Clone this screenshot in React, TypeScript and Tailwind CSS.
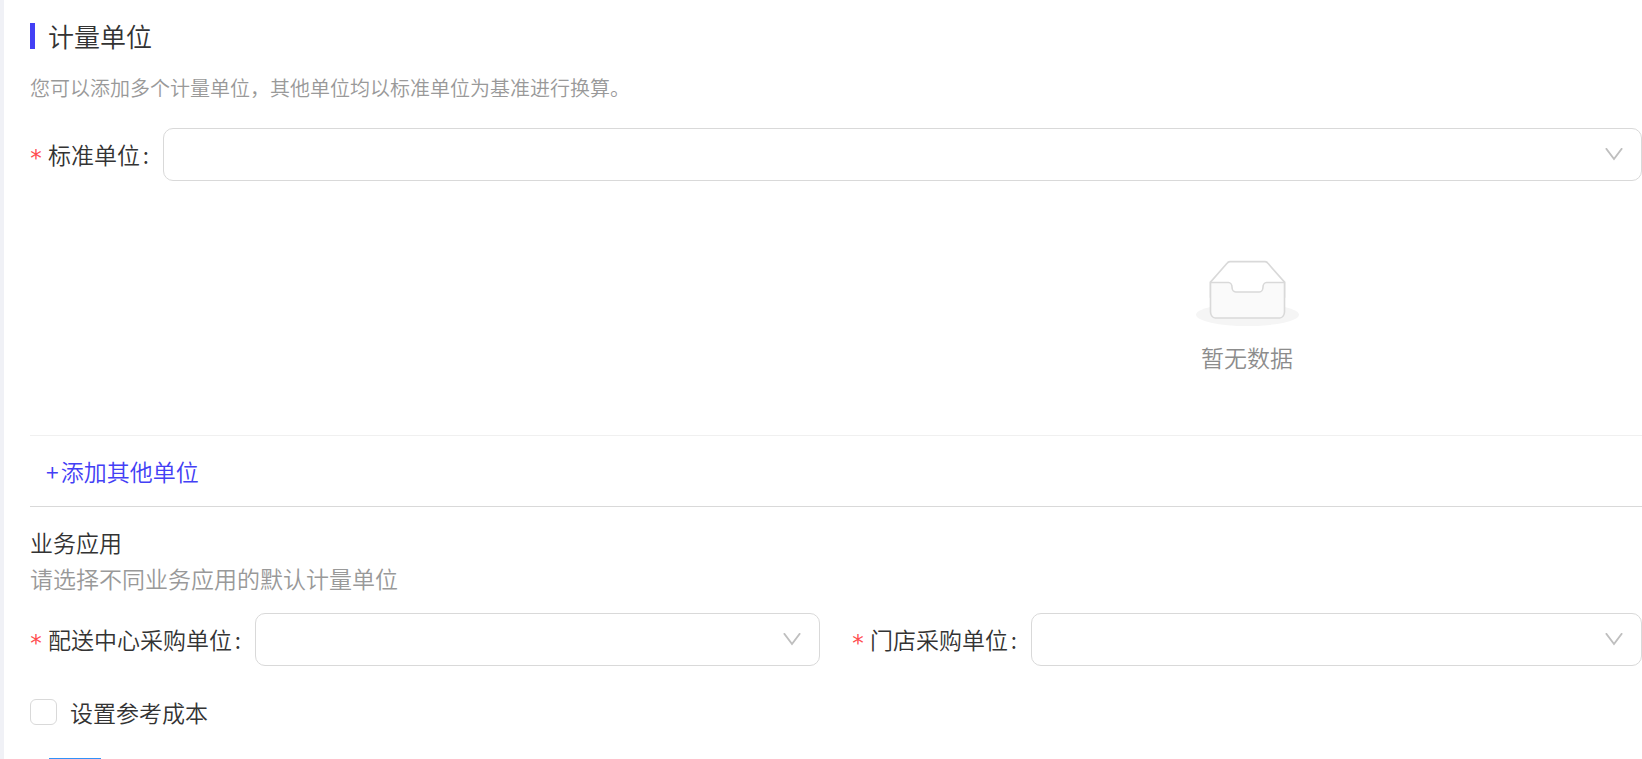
import React from 'react';

interface UnitSelectProps {
  id: string;
  label: string;
}

const UnitSelect: React.FC<UnitSelectProps> = ({ id, label }) => (
  <div className="flex items-center">
    <label htmlFor={id} className="flex items-center shrink-0 mr-3 pb-0.5">
      <span className="w-3 mr-1.5 pt-2 text-center font-['DejaVu_Sans'] font-normal text-[23px] leading-7 text-[#ff4d4f]">*</span>
      <span>{label}</span>
      <span className="w-[11px] text-right pr-0.5">:</span>
    </label>
    <div className="relative flex-1 min-w-0">
      <select
        id={id}
        defaultValue=""
        className="block w-full h-[53px] appearance-none rounded-[10px] border border-[#d9d9d9] bg-white pl-4 pr-12 outline-none focus:border-[#4340f5]"
      >
        <option value="" />
      </select>
      <svg
        viewBox="0 0 18 13"
        className="absolute right-[19px] top-5 w-[18px] h-[13px] pointer-events-none"
        fill="none"
        stroke="#bfbfbf"
        strokeWidth="1.9"
      >
        <path d="M0.9 0.3L9 11L17.1 0.3" />
      </svg>
    </div>
  </div>
);

const EmptyState = () => (
  <div className="flex flex-col items-center pl-[51%] pt-[79px] pb-[60px]">
    <svg viewBox="0 0 64 41" className="w-[103px] h-[66px]">
      <g transform="translate(0 1)" fill="none" fillRule="evenodd">
        <ellipse fill="#f5f5f5" cx="32" cy="33" rx="32" ry="7" />
        <g fillRule="nonzero" stroke="#d9d9d9">
          <path d="M55 12.76L44.854 1.258C44.367.474 43.656 0 42.907 0H21.093c-.749 0-1.46.474-1.947 1.257L9 12.761V22h46v-9.24z" />
          <path
            d="M41.613 15.931c0-1.605.994-2.93 2.227-2.931H55v18.137C55 33.26 53.68 35 52.05 35h-40.1C10.32 35 9 33.259 9 31.137V13h11.16c1.233 0 2.227 1.323 2.227 2.928v.022c0 1.605 1.005 2.901 2.237 2.901h14.752c1.232 0 2.237-1.308 2.237-2.913v-.007z"
            fill="#fafafa"
          />
        </g>
      </g>
    </svg>
    <p className="mt-[13px] leading-9 text-[#8c8c8c]">暂无数据</p>
  </div>
);

const App = () => {
  return (
    <div className="min-h-screen overflow-hidden border-l-4 border-[#f0f1f6] bg-white pl-[26px] pt-[18px] font-['Noto_Sans_CJK_SC',sans-serif] font-[350] text-[23px] leading-9 text-[#333333]">
      {/* Section title */}
      <h2 className="flex items-center gap-[13px] text-[26px] leading-9 font-[350]">
        <span className="w-[5px] h-[26px] bg-[#4340f5]" />
        计量单位
      </h2>
      <p className="mt-4 mb-[22px] text-[20px] leading-9 text-[#999999]">
        您可以添加多个计量单位，其他单位均以标准单位为基准进行换算。
      </p>

      <UnitSelect id="base-unit" label="标准单位" />

      {/* Other units */}
      <EmptyState />
      <div className="border-t border-[#f0f0f0] border-b border-b-[#d9d9d9] px-4 py-[17px]">
        <button type="button" className="flex gap-0.5 text-[#4340f5] cursor-pointer">
          <span>+</span>
          <span>添加其他单位</span>
        </button>
      </div>

      {/* Default unit per business */}
      <h3 className="mt-[17px] font-[350]">业务应用</h3>
      <p className="mb-[17px] text-[#999999]">请选择不同业务应用的默认计量单位</p>
      <div className="grid grid-cols-2 gap-8">
        <UnitSelect id="center-unit" label="配送中心采购单位" />
        <UnitSelect id="store-unit" label="门店采购单位" />
      </div>

      <label className="flex items-center gap-[13px] mt-7 w-fit">
        <input
          type="checkbox"
          className="w-[27px] h-[26px] appearance-none rounded-md border border-[#d9d9d9] bg-white checked:bg-[#4340f5]"
        />
        设置参考成本
      </label>
      <div className="mt-7 ml-[19px] w-[52px] h-px bg-[#3291f8]" />
    </div>
  );
};

export default App;
